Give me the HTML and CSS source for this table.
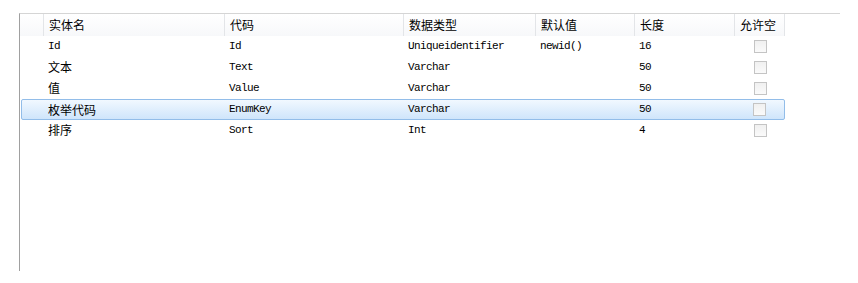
FILE: index.html
```html
<!DOCTYPE html>
<html lang="zh-CN">
<head>
    <meta charset="UTF-8">
    <title>实体字段</title>
    <link rel="stylesheet" href="styles.css">
</head>
<body>

    <div class="grid-panel">
        <!-- column headers -->
        <div class="grid-head">
            <div class="head-cell"></div>
            <div class="head-cell">实体名</div>
            <div class="head-cell">代码</div>
            <div class="head-cell">数据类型</div>
            <div class="head-cell">默认值</div>
            <div class="head-cell">长度</div>
            <div class="head-cell">允许空</div>
        </div>

        <div class="grid-row">
            <div></div>
            <div class="cell latin">Id</div>
            <div class="cell latin">Id</div>
            <div class="cell latin">Uniqueidentifier</div>
            <div class="cell latin">newid()</div>
            <div class="cell latin">16</div>
            <div class="cell check"><span class="box"></span></div>
        </div>
        <div class="grid-row">
            <div></div>
            <div class="cell">文本</div>
            <div class="cell latin">Text</div>
            <div class="cell latin">Varchar</div>
            <div class="cell latin"></div>
            <div class="cell latin">50</div>
            <div class="cell check"><span class="box"></span></div>
        </div>
        <div class="grid-row">
            <div></div>
            <div class="cell">值</div>
            <div class="cell latin">Value</div>
            <div class="cell latin">Varchar</div>
            <div class="cell latin"></div>
            <div class="cell latin">50</div>
            <div class="cell check"><span class="box"></span></div>
        </div>
        <div class="grid-row selected">
            <div></div>
            <div class="cell">枚举代码</div>
            <div class="cell latin">EnumKey</div>
            <div class="cell latin">Varchar</div>
            <div class="cell latin"></div>
            <div class="cell latin">50</div>
            <div class="cell check"><span class="box"></span></div>
        </div>
        <div class="grid-row">
            <div></div>
            <div class="cell">排序</div>
            <div class="cell latin">Sort</div>
            <div class="cell latin">Int</div>
            <div class="cell latin"></div>
            <div class="cell latin">4</div>
            <div class="cell check"><span class="box"></span></div>
        </div>
    </div>

</body>
</html>
```

FILE: styles.css
```css
body {
    margin: 0;
    background: #fff;
    font-family: "Noto Sans CJK SC", "DejaVu Sans", sans-serif;
    font-size: 12px;
    color: #000;
}

.grid-panel {
    margin: 13px 0 0 19px;
    width: 821px;
    height: 258px;
    border-top: 1px solid #d5d5d5;
    border-left: 1px solid #a0a0a0;
    box-sizing: border-box;
}

.grid-head {
    display: grid;
    grid-template-columns: 24px 181px 179px 132px 99px 100px 50px;
    height: 22px;
    width: 765px;
    background: linear-gradient(#ffffff, #f7f8fa);
}

.head-cell {
    border-right: 1px solid #e3e5e8;
    padding-left: 5px;
    line-height: 21px;
    white-space: nowrap;
}

.head-cell:first-child {
    padding-left: 0;
}

.grid-row {
    display: grid;
    grid-template-columns: 23px 181px 179px 132px 99px 100px 50px;
    height: 21px;
    width: 764px;
    margin-left: 1px;
    box-sizing: border-box;
}

/* the border eats a pixel on each side, so the outer columns shrink */
.grid-row.selected {
    grid-template-columns: 22px 181px 179px 132px 99px 100px 49px;
    border: 1px solid #92bde9;
    border-radius: 2px;
    background: linear-gradient(#f1f8ff, #cfe5fb);
}

.cell {
    padding-left: 4px;
    line-height: 20px;
    white-space: nowrap;
}

.grid-row.selected .cell {
    line-height: 19px;
}

.latin {
    font-family: "Liberation Mono", "DejaVu Sans Mono", monospace;
    font-size: 11px;
    letter-spacing: -0.6px;
}

.check {
    display: flex;
    align-items: center;
    justify-content: center;
    padding-left: 0;
}

.box {
    width: 13px;
    height: 13px;
    box-sizing: border-box;
    border: 1px solid #c4c4c4;
    background: linear-gradient(#f0f0f0, #fafafa);
}
```
